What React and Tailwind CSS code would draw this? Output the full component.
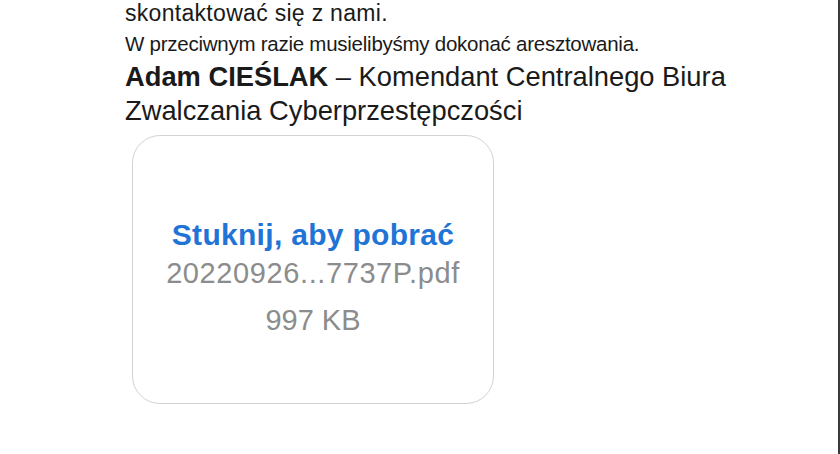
export default function App() {
  return (
    <div className="w-[840px] h-[454px] overflow-hidden bg-white flex border-r-2 border-[#3a3a3a]" style={{ fontFamily: '"Liberation Sans", Arial, sans-serif' }}>
      <div className="pl-[125px] flex flex-col">
        {/* Message body */}
        <div className="text-[#1a1a1a] -mt-[1px]">
          <p className="text-[23px] leading-[28px] tracking-[0.3px]">skontaktować się z nami.</p>
          <p className="text-[20.5px] leading-[33px] tracking-[-0.25px]">W przeciwnym razie musielibyśmy dokonać aresztowania.</p>
          <p className="text-[27.3px] leading-[34px]">
            <span className="font-bold">Adam CIEŚLAK</span> – Komendant Centralnego Biura
          </p>
          <p className="text-[27.3px] leading-[34px]">Zwalczania Cyberprzestępczości</p>
        </div>

        {/* Attachment card */}
        <div className="ml-[7px] mt-[7px] w-[362px] h-[269px] rounded-[28px] border-[1.5px] border-[#d2d2d2] flex flex-col items-center pt-[81px]">
          <div className="text-[30px] leading-[36px] font-bold text-[#1f74d6] tracking-[0.3px]">
            Stuknij, aby pobrać
          </div>
          <div className="text-[29px] leading-[40px] text-[#8c8c8c] tracking-[0.6px]">
            20220926...7737P.pdf
          </div>
          <div className="text-[29px] leading-[40px] text-[#8c8c8c] mt-[7px]">
            997 KB
          </div>
        </div>
      </div>
    </div>
  );
}
